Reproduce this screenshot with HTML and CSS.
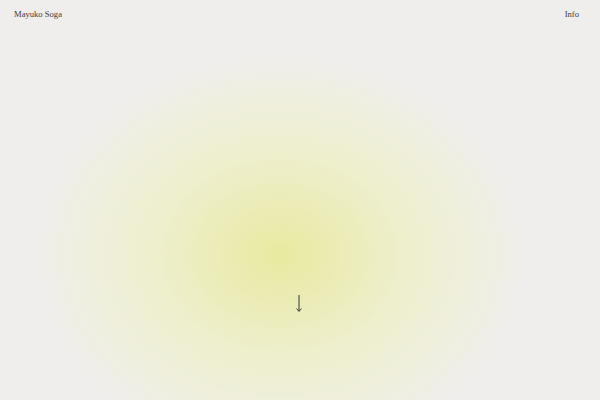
FILE: index.html
```
<!DOCTYPE html>
<html>
<head>
<meta charset="utf-8">
<link rel="stylesheet" href="styles.css">
</head>
<body>
<div class="page">
  <header class="top">
    <a class="name">Mayuko Soga</a>
    <a class="info">Info</a>
  </header>
  <div class="glow"></div>
  <svg class="arrow" width="10" height="20" viewBox="0 0 10 20">
    <line x1="5" y1="1" x2="5" y2="17" stroke="#333" stroke-width="1"/>
    <path d="M2.5 14.5 L5 17.5 L7.5 14.5" fill="none" stroke="#333" stroke-width="0.9"/>
  </svg>
</div>
</body>
</html>
```
FILE: styles.css
```
html, body {
  margin: 0;
  padding: 0;
  background: #efeeec;
}
.page {
  position: relative;
  width: 600px;
  height: 400px;
  overflow: hidden;
  font-family: "Liberation Serif", serif;
  color: #3a3a3a;
}
.top {
  position: relative;
  z-index: 2;
  display: flex;
  justify-content: space-between;
  padding: 9px 21px 0 14px;
  font-size: 8.6px;
}
.glow {
  position: absolute;
  left: 35px;
  top: 55px;
  width: 490px;
  height: 400px;
  border-radius: 50%;
  background: radial-gradient(closest-side, #e8eaa0 0%, #ebecb6 25%, #eeefcc 50%, #efefdc 75%, rgba(239,238,236,0) 100%);
}
.arrow {
  position: absolute;
  z-index: 2;
  left: 294px;
  top: 294px;
}
```
